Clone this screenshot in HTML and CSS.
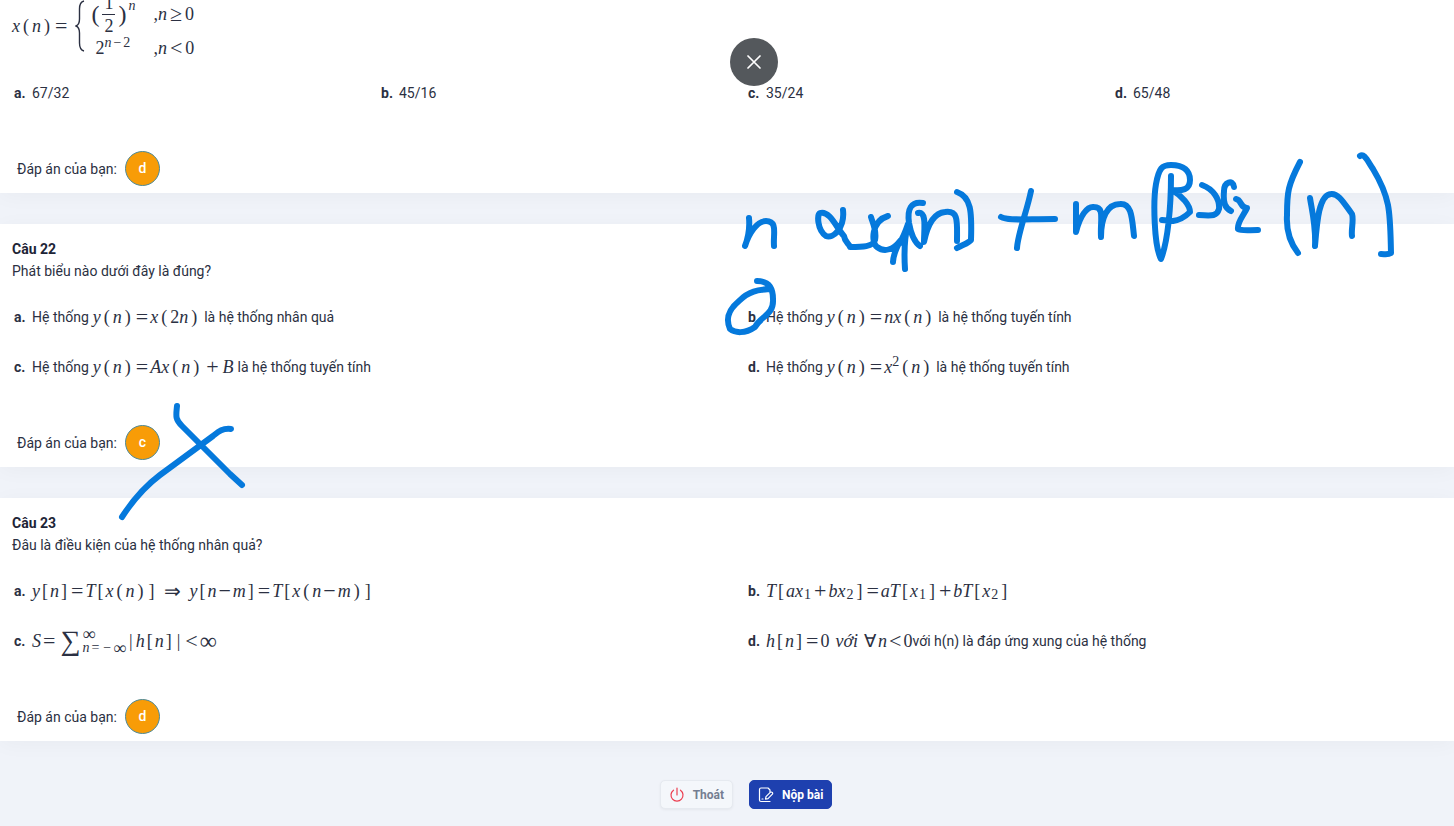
FILE: index.html
```html
<!DOCTYPE html>
<html lang="vi">
<head>
<meta charset="utf-8">
<meta name="viewport" content="width=device-width, initial-scale=1">
<title>Bài thi</title>
<link rel="stylesheet" href="styles.css">
</head>
<body>
<main class="page">
  <section class="card card-first">
    <div class="formula">
      <span class="math"><i>x</i><span class="p">(</span><i>n</i><span class="p">)</span><span class="op">=</span></span>
      <svg class="brace" viewBox="0 0 10 52" aria-hidden="true"><path d="M9 1C5 2 4.500 5 4.500 9V19C4.500 23 3.500 25 1 26C3.500 27 4.500 29 4.500 33V43C4.500 47 5 50 9 51" /></svg>
      <div class="cases">
        <span class="math case-power"><span class="big">(</span><span class="frac"><span class="num">1</span><span>2</span></span><span class="big">)</span><sup><i>n</i></sup></span>
        <span class="math">,<i>n</i><span class="op">≥</span>0</span>
        <span class="math case-exp">2<sup><i>n</i><span class="minus">−</span>2</sup></span>
        <span class="math">,<i>n</i><span class="op">&lt;</span>0</span>
      </div>
    </div>
    <div class="options four">
      <div class="option"><b>a.</b><span>67/32</span></div>
      <div class="option"><b>b.</b><span>45/16</span></div>
      <div class="option"><b>c.</b><span>35/24</span></div>
      <div class="option"><b>d.</b><span>65/48</span></div>
    </div>
    <div class="answer"><span>Đáp án của bạn:</span><span class="badge">d</span></div>
  </section>

  <section class="card">
    <h2>Câu 22</h2>
    <p class="question">Phát biểu nào dưới đây là đúng?</p>
    <div class="options">
      <div class="option"><b>a.</b><span>Hệ thống</span><span class="math"><i>y</i><span class="p">(</span><i>n</i><span class="p">)</span><span class="op">=</span><i>x</i><span class="p">(</span>2<i>n</i><span class="p">)</span></span><span>là hệ thống nhân quả</span></div>
      <div class="option"><b>b.</b><span>Hệ thống</span><span class="math"><i>y</i><span class="p">(</span><i>n</i><span class="p">)</span><span class="op">=</span><i>nx</i><span class="p">(</span><i>n</i><span class="p">)</span></span><span>là hệ thống tuyến tính</span></div>
      <div class="option"><b>c.</b><span>Hệ thống</span><span class="math"><i>y</i><span class="p">(</span><i>n</i><span class="p">)</span><span class="op">=</span><i>Ax</i><span class="p">(</span><i>n</i><span class="p">)</span><span class="op plus">+</span><i>B</i></span><span>là hệ thống tuyến tính</span></div>
      <div class="option"><b>d.</b><span>Hệ thống</span><span class="math"><i>y</i><span class="p">(</span><i>n</i><span class="p">)</span><span class="op">=</span><i>x</i><sup>2</sup><span class="p">(</span><i>n</i><span class="p">)</span></span><span>là hệ thống tuyến tính</span></div>
    </div>
    <div class="answer"><span>Đáp án của bạn:</span><span class="badge">c</span></div>
  </section>

  <section class="card">
    <h2>Câu 23</h2>
    <p class="question">Đâu là điều kiện của hệ thống nhân quả?</p>
    <div class="options">
      <div class="option"><b>a.</b><span class="math"><i>y</i><span class="s">[</span><i>n</i><span class="s">]</span><span class="op">=</span><i>T</i><span class="s">[</span><i>x</i><span class="p">(</span><i>n</i><span class="p">)</span><span class="s">]</span><span class="arrow">⇒</span><i>y</i><span class="s">[</span><i>n</i><span class="op">−</span><i>m</i><span class="s">]</span><span class="op">=</span><i>T</i><span class="s">[</span><i>x</i><span class="p">(</span><i>n</i><span class="op">−</span><i>m</i><span class="p">)</span><span class="s">]</span></span></div>
      <div class="option"><b>b.</b><span class="math"><i>T</i><span class="s">[</span><i>ax</i><sub>1</sub><span class="op">+</span><i>bx</i><sub>2</sub><span class="s">]</span><span class="op">=</span><i>aT</i><span class="s">[</span><i>x</i><sub>1</sub><span class="s">]</span><span class="op">+</span><i>bT</i><span class="s">[</span><i>x</i><sub>2</sub><span class="s">]</span></span></div>
      <div class="option"><b>c.</b><span class="math"><i>S</i><span class="op">=</span><span class="sum">∑</span><span class="limits"><span class="inf">∞</span><span class="lower"><i>n</i><span class="eq">=</span><span class="eq">−</span><span class="inf">∞</span></span></span><span class="bar">|</span><i>h</i><span class="s">[</span><i>n</i><span class="s">]</span><span class="bar">|</span><span class="op">&lt;</span><span class="inf">∞</span></span></div>
      <div class="option"><b>d.</b><span class="math"><i>h</i><span class="s">[</span><i>n</i><span class="s">]</span><span class="op">=</span>0<i class="word">với</i><span class="all">∀</span><i>n</i><span class="op">&lt;</span>0</span><span class="joined">với h(n) là đáp ứng xung của hệ thống</span></div>
    </div>
    <div class="answer"><span>Đáp án của bạn:</span><span class="badge">d</span></div>
  </section>

  <div class="actions">
    <button type="button" class="btn exit">
      <svg viewBox="0 0 16 16" aria-hidden="true"><path d="M8 1V8M4.500 3.200A6 6 0 1 0 11.500 3.200" /></svg>Thoát
    </button>
    <button type="button" class="btn submit">
      <svg viewBox="0 0 16 16" aria-hidden="true"><path d="M12 5V3L10 1H3Q1.500 1 1.500 2.500V13Q1.500 14.500 3 14.500H12M4 12H5M7.500 12.200L8 9.700L12.500 5.200Q13.500 4.700 14.300 5.500Q15 6.300 14.400 7.200L10 11.700L7.500 12.200Z" /></svg>Nộp bài
    </button>
  </div>

  <svg class="ink" aria-hidden="true">
    <path d="M749 218C750 229 748 238 745 246C749 233 757 221 766 221C778 221 773 234 774 246" />
    <path d="M843 210C845 228 833 239 826 236C817 230 817 214 820 213C830 210 837 229 844 236C845 243 849 243 850 247C862 247 873 247 875 240C877 231 873 224 871 217M888 216C871 221 871 243 877 247C885 253 894 249 900 241C896 249 893 256 893 262M899 244C903 238 906 230 908 224C904 239 904 254 905 269" />
    <path d="M923 203C911 201 907 209 909 223C911 234 914 242 920 246M918 213C927 211 924 229 924 242C927 227 933 213 945 212C959 210 957 222 957 241M957 192C971 197 972 211 971 240C969 243 962 245 957 248" />
    <path d="M1031 191C1027 211 1018 233 1017 248M1001 217C1008 221 1024 219 1055 219" />
    <path d="M1076 204V232C1080 216 1087 206 1094 207C1105 207 1100 220 1101 237C1101 218 1107 204 1120 204C1132 203 1132 219 1134 236" />
    <path d="M1171 176C1171 206 1168 241 1161 259C1154 246 1153 201 1156 184C1159 168 1162 165 1171 165C1184 165 1190 171 1190 180C1190 190 1182 191 1172 190C1182 196 1190 205 1190 212C1185 217 1180 220 1173 221L1162 220M1202 185C1213 189 1220 199 1219 209C1217 216 1213 216 1199 215M1234 187C1233 179 1224 182 1224 191C1223 203 1225 208 1231 211M1236 199C1242 200 1240 208 1247 208C1244 215 1237 222 1238 229C1241 231 1248 230 1258 230" />
    <path d="M1300 162C1288 185 1287 192 1287 215C1286 231 1291 244 1298 253M1310 198C1312 211 1316 226 1315 246C1317 221 1319 195 1331 194C1339 193 1345 205 1352 214C1354 220 1351 229 1352 236M1360 156C1364 153 1367 160 1373 169C1391 199 1390 213 1391 253C1388 255 1385 254 1381 254" />
    <path d="M757 281C768 281 773 287 773 299C774 315 761 316 755 327C745 334 735 333 730 329C726 320 727 311 739 301C749 291 758 290 769 289" />
    <path d="M177 406C176 416 175 419 182 426L230 474L242 485M231 429C222 428 218 432 213 436L160 475C144 487 133 500 122 517" />
  </svg>
  <button type="button" class="close" aria-label="Đóng"><svg viewBox="0 0 14 14" aria-hidden="true"><path d="M1 1L13 13M13 1L1 13" /></svg></button>
</main>
</body>
</html>
```

FILE: styles.css
```css
* { box-sizing: border-box; }
body {
  margin: 0;
  overflow: hidden;
  background: #f0f3f9;
  color: #2b3042;
  font: 14px/22px Roboto, sans-serif;
}
.page { position: relative; overflow: hidden; }
.card {
  margin-bottom: 31px;
  padding: 14px 0 7px 12px;
  background: #fff;
  box-shadow: 0 3px 20px #00000009;
}
.card-first { padding-top: 0; }
h2, p { margin: 0; font-size: 14px; line-height: 22px; }
h2 { font-weight: 700; color: #1d2436; }

.options {
  display: grid;
  grid-template-columns: repeat(2, minmax(0, 1fr));
  gap: 0 28px;
  margin: 10px 0 33px;
  padding-left: 2px;
}
.four { grid-template-columns: repeat(4, minmax(0, 1fr)); margin-top: 8px; }
.option { display: flex; align-items: center; height: 50px; white-space: nowrap; }
.option b { width: 18px; font-weight: 700; }
.option .math:not(:nth-child(2)) { margin-left: 4px; }
.math + span { margin-left: 4px; }
.math + .joined { margin-left: 0; }

.answer { display: flex; align-items: center; gap: 8px; padding-left: 5px; }
.badge {
  width: 35px;
  height: 35px;
  border: 1px solid #4d8a99;
  border-radius: 50%;
  background: #f89c07;
  color: #fff;
  font-weight: 500;
  line-height: 33px;
  text-align: center;
}

.math {
  display: inline-flex;
  align-items: center;
  font: 18px/22px "Liberation Serif", serif;
}
.p { padding: 0 3px; }
.s { padding: 0 2px; }
.bar { padding: 0 3px; }
.op { padding: 0 2px; font-size: 22px; }
.plus { padding: 0 4px; }
.arrow { padding: 0 8px; font-size: 20px; }
.math sup, .math sub { font-size: 14px; line-height: 14px; }
.math sup { padding-bottom: 10px; }
.math sub { padding: 8px 1px 0; }
.word { padding: 0 6px; }
.all { padding-right: 2px; }
.sum { padding: 0 2px 0 3px; font-size: 28px; }
.inf { font-size: 24px; }
.limits { display: grid; font-size: 14px; line-height: 14px; }
.limits .inf { font-size: 18px; }
.lower { display: flex; }
.eq { padding: 0 2px; }

.formula { display: flex; align-items: center; margin-top: -8px; }
.brace { width: 10px; height: 52px; margin: 0 6px; fill: none; stroke: #2b3042; stroke-width: 1.4; }
.cases { display: grid; grid-template-columns: 58px auto; grid-template-rows: 44px 24px; align-items: center; }
.cases .op { padding: 0 3px; }
.big { font-size: 24px; }
.frac { display: grid; padding: 0 3px; line-height: 22px; text-align: center; }
.num { padding: 0 2px; border-bottom: 1px solid; }
.case-power sup { padding: 0 0 16px 2px; }
.minus { padding: 0 2px; }

.actions { display: flex; justify-content: center; gap: 16px; padding: 8px 0 18px 38px; }
.btn {
  display: flex;
  align-items: center;
  gap: 8px;
  height: 29px;
  padding: 0 8px;
  border: 1px solid #e6eaf0;
  border-radius: 5px;
  font: 700 12px/20px Roboto, sans-serif;
}
.btn svg { width: 16px; height: 16px; fill: none; stroke: currentColor; stroke-width: 1.2; stroke-linecap: round; stroke-linejoin: round; }
.exit { background: #f4f7fb; color: #747e91; box-shadow: 0 1px 3px #0000000d; }
.exit svg { color: #ec3e50; }
.submit { border-color: #1e40af; background: #1e40af; color: #fff; }

.ink {
  position: absolute;
  inset: 0;
  width: 100%;
  height: 100%;
  fill: none;
  stroke: #0579dc;
  stroke-width: 6;
  stroke-linecap: round;
  stroke-linejoin: round;
  pointer-events: none;
}
.close {
  position: absolute;
  top: 38px;
  left: calc(50% + 3px);
  display: grid;
  place-items: center;
  width: 48px;
  height: 48px;
  padding: 0;
  border: 0;
  border-radius: 50%;
  background: #54585c;
}
.close svg { width: 14px; height: 14px; fill: none; stroke: #fff; stroke-width: 1.7; stroke-linecap: round; }
```
